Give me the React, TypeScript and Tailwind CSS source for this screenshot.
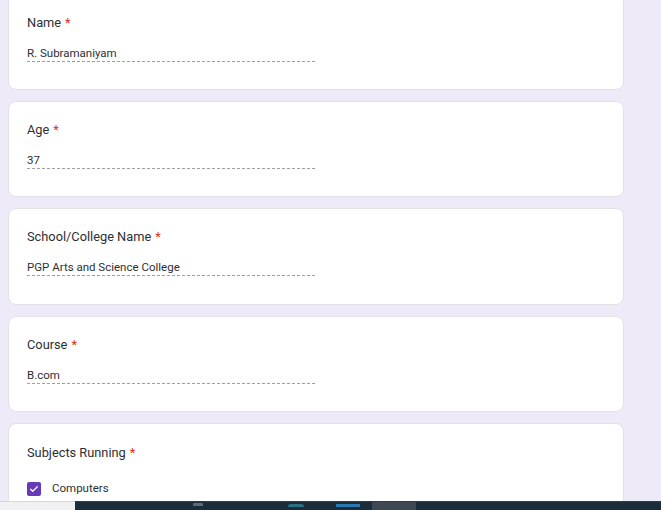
import React from "react";

type Field = { label: string; value: string };

const fields: Field[] = [
  { label: "Name", value: "R. Subramaniyam" },
  { label: "Age", value: "37" },
  { label: "School/College Name", value: "PGP Arts and Science College" },
  { label: "Course", value: "B.com" },
];

function Label({ text }: { text: string }) {
  return (
    <div className="text-[12.8px] leading-[16px] text-[#2e2f33]">
      {text}
      <span className="text-[#d93025] ml-[4px]">*</span>
    </div>
  );
}

function TextCard({ field, tall }: { field: Field; tall?: boolean }) {
  return (
    <div
      className={`bg-white rounded-[8px] border border-[#e3e0ea] pt-[20px] pl-[18px] ${tall ? "h-[97px]" : "h-[96px]"}`}
    >
      <Label text={field.label} />
      <div className="mt-[15px] w-[288px] h-[16px] border-b border-dashed border-[#9aa0a6] text-[11.5px] leading-[15px] text-[#2e2f33]">
        {field.value}
      </div>
    </div>
  );
}

function CheckCard() {
  return (
    <div className="bg-white rounded-t-[8px] border border-b-0 border-[#e3e0ea] h-[90px] pt-[21px] pl-[18px]">
      <Label text="Subjects Running" />
      <div className="mt-[20px] flex items-center gap-[11px]">
        <div className="w-[14px] h-[14px] rounded-[2px] bg-[#673ab7] flex items-center justify-center">
          <svg width="10" height="10" viewBox="0 0 24 24" fill="none">
            <path d="M4 12.5l5 5L20 6.5" stroke="white" strokeWidth="3" strokeLinecap="round" strokeLinejoin="round" />
          </svg>
        </div>
        <span className="text-[11.5px] leading-[15px] text-[#2e2f33]">Computers</span>
      </div>
    </div>
  );
}

function Taskbar() {
  return (
    <div className="h-[9px] flex">
      <div className="w-[75px] bg-[#f1f1f3] border-t border-[#d6d6da]" />
      <div className="flex-1 bg-[#1b2c3b] border-t border-[#2d3e4c] flex">
        <div className="w-[118px]" />
        <div className="w-[10px] h-[3px] bg-[#5d6b78] rounded-t-[1px] mt-[1px]" />
        <div className="w-[85px]" />
        <div className="w-[16px] h-[3px] bg-[#2f6f86] rounded-t-full mt-[2px]" />
        <div className="w-[32px]" />
        <div className="w-[24px] h-[3px] bg-[#2a79b3] mt-[2px]" />
        <div className="w-[12px]" />
        <div className="w-[44px] bg-[#3d4853]" />
      </div>
    </div>
  );
}

export default function App() {
  return (
    <div
      className="w-[661px] h-[510px] overflow-hidden flex flex-col bg-[#eeeaf7]"
      style={{ fontFamily: "Roboto, 'Liberation Sans', sans-serif" }}
    >
      <div className="flex-1 overflow-hidden pl-[8px] pr-[37px]">
        <div className="mt-[-6px] flex flex-col gap-[11px]">
          {fields.map((f, i) => (
            <TextCard key={f.label} field={f} tall={i === 2} />
          ))}
          <CheckCard />
        </div>
      </div>
      <Taskbar />
    </div>
  );
}
